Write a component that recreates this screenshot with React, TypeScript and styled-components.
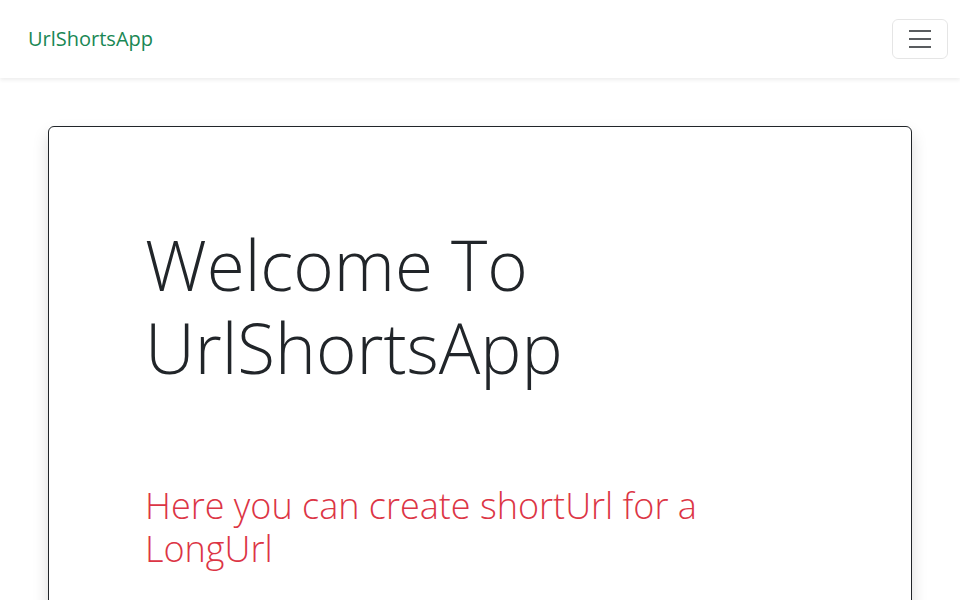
import React from "react";
import styled, { createGlobalStyle } from "styled-components";

const GlobalStyle = createGlobalStyle`
  * { box-sizing: border-box; }
  body {
    margin: 0;
    background: #fff;
    color: #212529;
    font-family: "Open Sans", "Liberation Sans", sans-serif;
    overflow: hidden;
  }
`;

function App() {
  return (
    <>
      <GlobalStyle />
      <Navbar>
        <Brand href="#">UrlShortsApp</Brand>
        <Toggler aria-label="Toggle navigation">
          <svg width="30" height="30" viewBox="0 0 30 30">
            <path
              stroke="rgba(33,37,41,0.75)"
              strokeLinecap="butt"
              strokeWidth="2"
              d="M4 7h22M4 15h22M4 23h22"
            />
          </svg>
        </Toggler>
      </Navbar>
      <Main>
        <Card>
          <Title>Welcome To UrlShortsApp</Title>
          <Lead>Here you can create shortUrl for a LongUrl</Lead>
        </Card>
      </Main>
    </>
  );
}

const Navbar = styled.nav`
  display: flex; /* brand left, toggler right */
  align-items: center;
  justify-content: space-between;
  height: 78px;
  padding: 0 12px 0 28px;
  background: #fff;
  box-shadow: 0 2px 4px rgba(0, 0, 0, 0.075);
  position: relative;
  z-index: 1;
`;
const Brand = styled.a`
  color: #198754;
  font-size: 20px;
  text-decoration: none;
  line-height: 30px;
`;
const Toggler = styled.button`
  display: flex;
  align-items: center;
  justify-content: center;
  width: 56px;
  height: 40px;
  padding: 0;
  background: transparent;
  border: 1px solid rgba(0, 0, 0, 0.1);
  border-radius: 6px;
`;
const Main = styled.main`
  padding: 48px 48px 0;
`;
const Card = styled.section`
  border: 1px solid #212529;
  border-radius: 6px;
  background: #fff;
  box-shadow: 0 8px 16px rgba(0, 0, 0, 0.15);
  padding: 96px 96px 60px;
  min-height: 600px;
`;
const Title = styled.h1`
  margin: 0 0 95px;
  font-size: 69.2px;
  font-weight: 300;
  line-height: 1.2;
  max-width: 480px;
`;
const Lead = styled.h2`
  margin: 0;
  max-width: 620px;
  color: #dc3545;
  font-size: 36px;
  font-weight: 300;
  line-height: 1.2;
`;

export default App;
